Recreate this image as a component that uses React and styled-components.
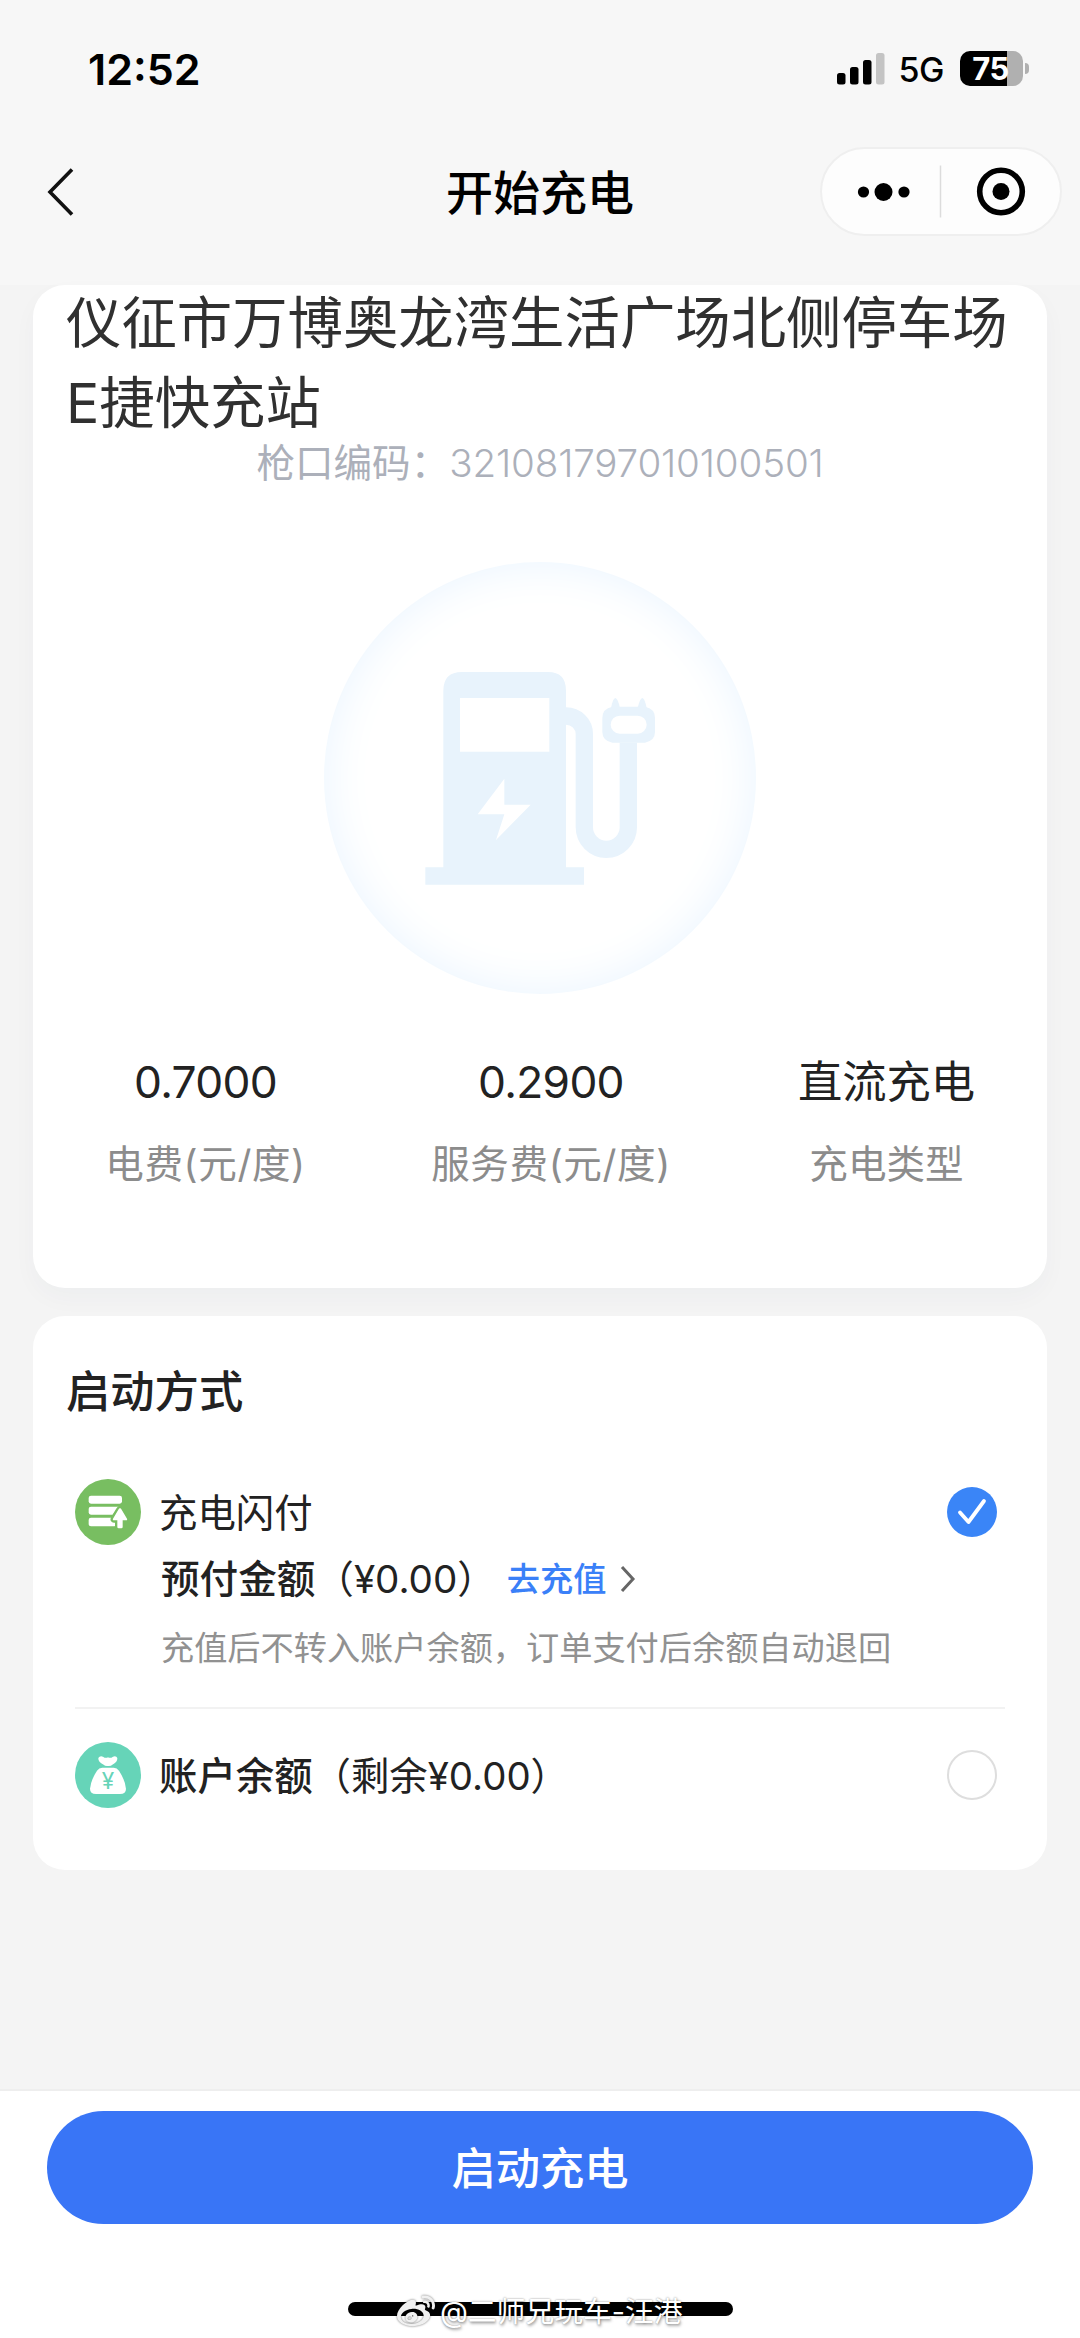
import React from "react";
import styled, { createGlobalStyle } from "styled-components";
import { FaWeibo } from "react-icons/fa";

const GlobalStyle = createGlobalStyle`
  * {
    box-sizing: border-box;
  }

  body {
    margin: 0;
    background: #f4f4f4;
    font-family: Inter, "Noto Sans CJK SC", sans-serif;
    color: #222;
  }
`;

const Page = styled.div`
  position: relative;
  display: flex;
  flex-direction: column;
  width: 1080px;
  height: 2338px;
  overflow: hidden;
`;

const Header = styled.header`
  height: 285px;
  background: #f7f7f7;
`;

const StatusBar = styled.div`
  display: flex;
  align-items: center;
  justify-content: space-between;
  height: 137px;
  padding: 0 51px 0 88px;
`;

const Time = styled.span`
  font-size: 43px;
  font-weight: 600;
  letter-spacing: 0;
  color: #000;
`;

const StatusIcons = styled.div`
  display: flex;
  align-items: center;
`;

const Network = styled.span`
  margin: 2px 16px 0 14px;
  font-size: 34px;
  font-weight: 500;
  line-height: 40px;
  letter-spacing: -0.5px;
  color: #000;
`;

const Battery = styled.div`
  display: flex;
  align-items: center;
  justify-content: center;
  width: 63px;
  height: 35px;
  padding-right: 2px;
  border-radius: 10px;
  background: linear-gradient(90deg, #000 47px, #b0b0b0 47px);
  font-size: 31px;
  font-weight: 700;
  letter-spacing: -0.6px;
  color: #fff;
`;

const BatteryTip = styled.span`
  width: 4px;
  height: 11px;
  margin-left: 2px;
  border-radius: 0 5px 5px 0;
  background: #b0b0b0;
`;

const NavBar = styled.nav`
  display: grid;
  grid-template-columns: 1fr auto 1fr;
  align-items: center;
  height: 88px;
  margin-top: 10px;
  padding: 0 18px 0 46px;
`;

const BackButton = styled.button`
  display: flex;
  width: 30px;
  padding: 0;
  border: 0;
  background: none;
`;

const NavTitle = styled.h1`
  margin: 2px 0 0 -28px;
  font-size: 47px;
  font-weight: 500;
  line-height: 60px;
  color: #000;
`;

const Capsule = styled.div`
  display: flex;
  align-items: center;
  justify-self: end;
  width: 242px;
  height: 89px;
  border: 2px solid #efefef;
  border-radius: 45px;
  background: #fdfdfd;
`;

const Card = styled.section`
  height: ${(props) => props.$height}px;
  margin: ${(props) => props.$gap || 0}px 33px 0;
  border-radius: 32px;
  background: #fff;
  box-shadow: ${(props) => (props.$raised ? "0 10px 24px rgba(30, 60, 90, 0.03)" : "none")};
`;

const StationName = styled.h2`
  margin: 0;
  padding: 0 20px 0 33px;
  position: relative;
  top: -2px;
  font-size: 55.4px;
  font-weight: 400;
  line-height: 80px;
  color: #303030;
`;

const GunCode = styled.p`
  margin: -2px 0 0;
  font-size: 38.6px;
  line-height: 40px;
  text-align: center;
  color: #acb0ba;
`;

const Code = styled.span`
  font-weight: 300;
  letter-spacing: -0.15px;
`;

const ChargerBadge = styled.div`
  width: 432px;
  height: 432px;
  margin: 79px auto 0;
  border-radius: 50%;
  box-shadow: inset 0 0 48px #e9f4fe;
`;

const Stats = styled.div`
  display: grid;
  grid-template-columns: 345px 346px 325px;
  margin-top: 58px;
  text-align: center;
`;

const StatValue = styled.div`
  font-size: 44.3px;
  line-height: 60px;
  letter-spacing: ${(props) => (props.$numeric ? "-0.7px" : "0")};
  color: #222;
`;

const StatLabel = styled.div`
  margin-top: 27px;
  font-size: 38.6px;
  line-height: 50px;
  letter-spacing: ${(props) => (props.$numeric ? "0.6px" : "0")};
  color: #8c8c8c;
`;

const SectionTitle = styled.h3`
  margin: 0;
  padding: 51px 33px 62px;
  font-size: 44.3px;
  font-weight: 500;
  line-height: 50px;
`;

const Methods = styled.div`
  padding: 0 42px;
`;

const MethodRow = styled.div`
  display: flex;
  align-items: center;
  height: 66px;
  padding-right: 8px;
`;

const MethodName = styled.div`
  flex: 1;
  margin: 2px 0 0 18px;
  font-size: 38.4px;
  line-height: 50px;
`;

const Strong = styled.span`
  font-weight: 500;
`;

const Amount = styled.span`
  font-weight: 400;
`;

const Prepaid = styled.div`
  display: flex;
  align-items: center;
  margin: 9px 0 0 86px;
  font-size: 38.6px;
  line-height: 50px;
`;

const RechargeLink = styled.a`
  display: flex;
  align-items: center;
  gap: 13px;
  margin-left: 11px;
  font-size: 33.2px;
  font-weight: 500;
  color: #3a80f8;
`;

const Hint = styled.p`
  margin: 22px 0 37px 86px;
  font-size: 33.2px;
  line-height: 44px;
  color: #919191;
`;

const Divider = styled.div`
  height: 2px;
  margin-bottom: 33px;
  background: #f2f2f2;
`;

const Radio = styled.span`
  display: flex;
  align-items: center;
  justify-content: center;
  width: 50px;
  height: 50px;
  border: ${(props) => (props.$checked ? "0" : "2.5px solid #dedede")};
  border-radius: 50%;
  background: ${(props) => (props.$checked ? "#3a85f7" : "#fff")};
`;

const Footer = styled.footer`
  display: flex;
  flex-direction: column;
  align-items: center;
  height: 249px;
  margin-top: auto;
  padding-top: 20px;
  border-top: 2px solid #eeeeee;
  background: #fff;
`;

const StartButton = styled.button`
  width: 986px;
  height: 113px;
  padding: 0 0 3px;
  border: 0;
  border-radius: 57px;
  background: #3975f6;
  font-family: inherit;
  font-size: 44.3px;
  font-weight: 500;
  color: #fff;
`;

const HomeIndicator = styled.div`
  width: 385px;
  height: 14px;
  margin-top: 78px;
  border-radius: 7px;
  background: #000;
`;

const Watermark = styled.div`
  position: absolute;
  bottom: 6px;
  left: 397px;
  display: flex;
  align-items: center;
  gap: 5px;
  font-size: 28.8px;
  line-height: 40px;
  white-space: nowrap;
  color: #fff;
  text-shadow: 0 0 2px rgba(0, 0, 0, 0.45), 1px 2px 3px rgba(0, 0, 0, 0.35);

  svg {
    color: #f0f0f0;
    filter: drop-shadow(0 0 1px rgba(0, 0, 0, 0.55));
  }
`;

const SignalIcon = () => (
  <svg width="48" height="32" viewBox="0 0 48 32">
    <rect x="0" y="20" width="8.5" height="11.5" rx="2.5" />
    <rect x="13" y="14" width="8.5" height="17.5" rx="2.5" />
    <rect x="26" y="7" width="8.5" height="24.5" rx="2.5" />
    <rect x="39" y="0" width="8.5" height="31.5" rx="2.5" fill="#c4c4c4" />
  </svg>
);

const CapsuleIcons = () => (
  <svg width="238" height="85" viewBox="0 0 238 85">
    <circle cx="41.5" cy="43" r="5.6" />
    <circle cx="61.5" cy="43" r="9" />
    <circle cx="82" cy="43" r="5.6" />
    <path d="M118.5 16.5v52" stroke="#dcdcdc" strokeWidth="1.5" />
    <circle cx="179" cy="42.5" r="21.3" fill="none" stroke="#000" strokeWidth="5.6" />
    <circle cx="179" cy="42.5" r="8.5" />
  </svg>
);

const ChargerIcon = () => (
  <svg width="432" height="432" viewBox="42 36 1296 1296">
    <g fill="#e8f3fc">
      <path
        fillRule="evenodd"
        d="M346 952h54V422q0-56 56-56h258q54 0 54 56v530h54v52H346zM450 444v161h268V444zM583 686 503 793h80l-25 77 104-106h-79z"
      />
      <path
        fillRule="evenodd"
        d="M907 470h98q30 6 30 34v42q0 26-30 32h-98q-30-6-30-32v-42q0-28 30-34zm22 27a27 27 0 0 0 0 54h54a27 27 0 0 0 0-54z"
      />
      <path d="M903 474q6-30 13-30t14 30zM983 474q7-30 14-30t13 30z" />
    </g>
    <path
      d="M768 498a55 54 0 0 1 55 54v280a66 66 0 0 0 132 0V578"
      fill="none"
      stroke="#e8f3fc"
      strokeWidth="52"
    />
  </svg>
);

const FlashPayIcon = () => (
  <svg width="66" height="66" viewBox="0 0 198 198">
    <circle cx="99" cy="99" r="99" fill="#78be61" />
    <g fill="#fff">
      <rect x="41" y="50" width="100" height="24" rx="7" />
      <path d="M48 83h83l-18 24H48q-7 0-7-7V90q0-7 7-7z" />
      <rect x="41" y="116" width="84" height="26" rx="7" />
    </g>
    <path
      d="M135 88q3 0 5 4l16 27q2 5-3 5h-10v20q0 4-4 4h-8q-4 0-4-4v-20h-10q-5 0-3-5l16-27q2-4 5-4z"
      fill="#fff"
      stroke="#78be61"
      strokeWidth="14"
      strokeLinejoin="round"
      paintOrder="stroke"
    />
  </svg>
);

const BalanceIcon = () => (
  <svg width="66" height="66" viewBox="0 0 198 198">
    <circle cx="99" cy="99" r="99" fill="#66d4b8" />
    <path
      d="M70 48q4-7 14-4 8 6 15 2 7 4 15-2 10-3 13 4 1 12-15 20-4 5-13 4-9 1-13-4-17-8-16-20z"
      fill="#fff"
    />
    <path
      d="M82 77h34q10 0 16 9 18 27 21 54 0 16-18 16H63q-18 0-18-16 3-27 21-54 6-9 16-9z"
      fill="#fff"
    />
    <text
      x="99"
      y="142"
      textAnchor="middle"
      fontFamily="Inter, sans-serif"
      fontSize="68"
      fontWeight="400"
      fill="#66d4b8"
    >
      ¥
    </text>
  </svg>
);

const stats = [
  { value: "0.7000", label: "电费(元/度)", numeric: true },
  { value: "0.2900", label: "服务费(元/度)", numeric: true },
  { value: "直流充电", label: "充电类型" }
];

export default function App() {
  return (
    <Page>
      <GlobalStyle />
      <Header>
        <StatusBar>
          <Time>12:52</Time>
          <StatusIcons>
            <SignalIcon />
            <Network>5G</Network>
            <Battery>75</Battery>
            <BatteryTip />
          </StatusIcons>
        </StatusBar>
        <NavBar>
          <BackButton aria-label="返回">
            <svg width="30" height="50" viewBox="0 0 30 50">
              <path d="M26 2.5 4 25l22 22.5" fill="none" stroke="#111" strokeWidth="3.6" />
            </svg>
          </BackButton>
          <NavTitle>开始充电</NavTitle>
          <Capsule>
            <CapsuleIcons />
          </Capsule>
        </NavBar>
      </Header>

      <Card $height={1003} $raised>
        <StationName>仪征市万博奥龙湾生活广场北侧停车场E捷快充站</StationName>
        <GunCode>
          枪口编码：<Code>321081797010100501</Code>
        </GunCode>
        <ChargerBadge>
          <ChargerIcon />
        </ChargerBadge>
        <Stats>
          {stats.map(({ value, label, numeric }) => (
            <div key={label}>
              <StatValue $numeric={numeric}>{value}</StatValue>
              <StatLabel $numeric={numeric}>{label}</StatLabel>
            </div>
          ))}
        </Stats>
      </Card>

      <Card $height={554} $gap={28}>
        <SectionTitle>启动方式</SectionTitle>
        <Methods>
          <MethodRow>
            <FlashPayIcon />
            <MethodName>充电闪付</MethodName>
            <Radio $checked>
              <svg width="30" height="30" viewBox="0 0 30 30">
                <path
                  d="M3 15.5 11.5 25 27 4"
                  fill="none"
                  stroke="#fff"
                  strokeWidth="3.8"
                  strokeLinecap="round"
                  strokeLinejoin="round"
                />
              </svg>
            </Radio>
          </MethodRow>
          <Prepaid>
            <Strong>预付金额</Strong>
            <Amount>（¥0.00）</Amount>
            <RechargeLink>
              去充值
              <svg width="18" height="28" viewBox="0 0 18 28">
                <path d="M3 2l11 12L3 26" fill="none" stroke="#666" strokeWidth="3" />
              </svg>
            </RechargeLink>
          </Prepaid>
          <Hint>充值后不转入账户余额，订单支付后余额自动退回</Hint>
          <Divider />
          <MethodRow>
            <BalanceIcon />
            <MethodName>
              <Strong>账户余额</Strong>
              <Amount>（剩余¥0.00）</Amount>
            </MethodName>
            <Radio />
          </MethodRow>
        </Methods>
      </Card>

      <Footer>
        <StartButton>启动充电</StartButton>
        <HomeIndicator />
      </Footer>
      <Watermark>
        <FaWeibo size={38} />
        <span>@二师兄玩车-汪港</span>
      </Watermark>
    </Page>
  );
}
